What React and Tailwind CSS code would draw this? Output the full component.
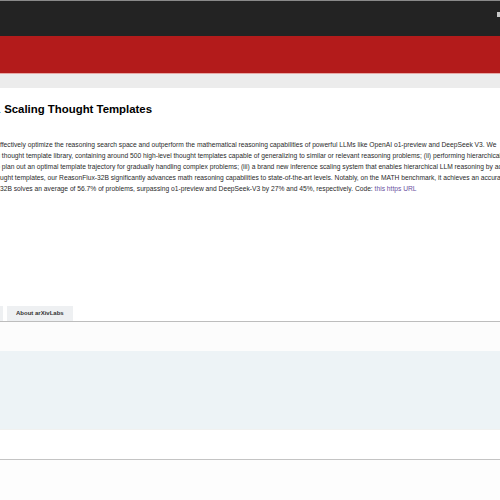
import React from 'react';

// Text is clipped at both page edges, so each line is laid out on its own.
const lines = [
    { cut: 'can e', text: 'ffectively optimize the reasoning search space and outperform the mathematical reasoning capabilities of powerful LLMs like OpenAI o1-preview and DeepSeek V3. We' },
    { cut: 'generic', text: '\u00a0thought template library, containing around 500 high-level thought templates capable of generalizing to similar or relevant reasoning problems; (ii) performing hierarchical reinforcement' },
    { cut: 'LLM to', text: '\u00a0plan out an optimal template trajectory for gradually handling complex problems; (iii) a brand new inference scaling system that enables hierarchical LLM reasoning by adaptively' },
    { cut: 'sequential tho', text: 'ught templates, our ReasonFlux-32B significantly advances math reasoning capabilities to state-of-the-art levels. Notably, on the MATH benchmark, it achieves an accuracy of' },
    { cut: 'ReasonFlux-', text: '32B solves an average of 56.7% of problems, surpassing o1-preview and DeepSeek-V3 by 27% and 45%, respectively. Code: ', link: 'this https URL' },
];

export default function App() {
    return (
        <div className="w-[500px] h-[500px] overflow-hidden bg-white font-['Liberation_Sans',Arial,sans-serif]">
            {/* Top bars */}
            <div className="h-[1px] bg-[#8a8a8a]" />
            <div className="h-[35px] bg-[#232323] flex justify-end pt-[11px]">
                <div className="w-[3px] h-[5px] bg-[#c8c8c8]" />
            </div>
            <div className="h-[38px] bg-[#b31b1b] border-b border-[#e6a9a6]" />
            <div className="h-[14px] bg-[#ececec]" />

            {/* Title */}
            <div className="pt-[14px] flex whitespace-nowrap text-[11.4px] leading-[14px] font-bold text-black">
                <span className="flex w-0 shrink-0 justify-end">ReasonFlux: Hierarchical LLM Reasoning via</span>
                <span className="pl-[1px]">&nbsp;Scaling Thought Templates</span>
            </div>

            {/* Abstract */}
            <div className="mt-[23px] text-[6.7px] leading-[11px] text-[#2a2a2a]">
                {lines.map((l, i) => (
                    <div key={i} className="flex whitespace-nowrap">
                        <span className="flex w-0 shrink-0 justify-end">{l.cut}</span>
                        <span>
                            {l.text}
                            {l.link && <span className="text-[#6a4fa0]">{l.link}</span>}
                        </span>
                    </div>
                ))}
            </div>

            {/* Tabs */}
            <div className="mt-[111px] h-[17px] flex items-end gap-[4px] border-b border-[#bdbdbd]">
                <div className="w-[3px] h-[15px] bg-[#eef0f2]" />
                <div className="h-[15px] px-[9px] flex items-center bg-[#eef0f2] text-[6px] font-bold text-[#333]">
                    About arXivLabs
                </div>
            </div>

            {/* Footer */}
            <div className="h-[29px] bg-[#fcfcfc]" />
            <div className="h-[79px] bg-[#edf3f6] border-b border-[#f1f1f0]" />
            <div className="h-[29px] bg-white" />
            <div className="h-[1px] bg-[#c4c4c4]" />
            <div className="h-[40px] bg-[#fdfdfd]" />
        </div>
    );
}
